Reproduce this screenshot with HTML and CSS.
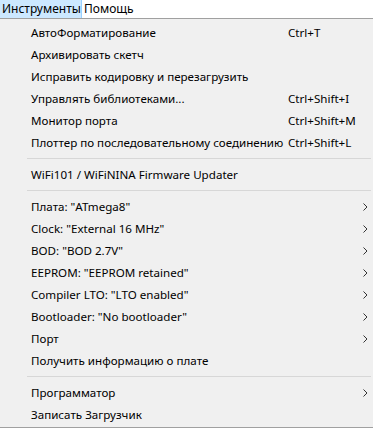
FILE: index.html
```html
<!DOCTYPE html>
<html>
	<head>
		<meta charset="utf-8" />
		<title>Инструменты</title>
		<link rel="stylesheet" href="styles.css">
	</head>
	<body>
		<div class="menubar">
			<span class="bar-item active">Инструменты</span>
			<span class="bar-item">Помощь</span>
		</div>

		<div class="menu">
			<div class="row"><span>АвтоФорматирование</span><span class="key">Ctrl+T</span></div>
			<div class="row"><span>Архивировать скетч</span></div>
			<div class="row"><span>Исправить кодировку и перезагрузить</span></div>
			<div class="row"><span>Управлять библиотеками...</span><span class="key">Ctrl+Shift+I</span></div>
			<div class="row"><span>Монитор порта</span><span class="key">Ctrl+Shift+M</span></div>
			<div class="row"><span>Плоттер по последовательному соединению</span><span class="key">Ctrl+Shift+L</span></div>
			<div class="sep"></div>
			<div class="row"><span>WiFi101 / WiFiNINA Firmware Updater</span></div>
			<div class="sep"></div>
			<div class="row sub"><span>Плата: "ATmega8"</span></div>
			<div class="row sub"><span>Clock: "External 16 MHz"</span></div>
			<div class="row sub"><span>BOD: "BOD 2.7V"</span></div>
			<div class="row sub"><span>EEPROM: "EEPROM retained"</span></div>
			<div class="row sub"><span>Compiler LTO: "LTO enabled"</span></div>
			<div class="row sub"><span>Bootloader: "No bootloader"</span></div>
			<div class="row sub"><span>Порт</span></div>
			<div class="row"><span>Получить информацию о плате</span></div>
			<div class="sep"></div>
			<div class="row sub"><span>Программатор</span></div>
			<div class="row"><span>Записать Загрузчик</span></div>
		</div>

		<script>
			// submenu arrows
			var arrow = '<svg class="arrow" width="5" height="8" viewBox="0 0 5 8"><path d="M0.5 0.5 L4 4 L0.5 7.5" fill="none" stroke="#333" stroke-width="1"/></svg>';
			document.querySelectorAll('.sub').forEach(function (row) {
				row.insertAdjacentHTML('beforeend', arrow);
			});
		</script>
	</body>
</html>
```

FILE: styles.css
```css
body {
	margin: 0;
	font-family: "Noto Sans", "Open Sans", sans-serif;
	font-size: 11.6px;
	color: #000;
	background-color: #f0f0f0;
}

.menubar {
	display: flex;
	height: 18px;
	background-color: #fff;
	border-bottom: 1px solid #a0a0a0;
	font-size: 12px;
}

.bar-item {
	padding: 0 4px 0 2px;
	line-height: 18px;
}

.bar-item.active {
	background-color: #cce8ff;
	border-right: 1px solid #99d1ff;
	width: 75px;
}

.menu {
	padding: 2px 0 2px;
	border-bottom: 1px solid #a0a0a0;
}

.row {
	position: relative;
	display: flex;
	align-items: center;
	height: 22px;
	padding-left: 31px;
}

.row span:first-child {
	width: 257px;
	white-space: nowrap;
}

.key {
	white-space: nowrap;
}

.arrow {
	position: absolute;
	right: 5px;
	top: 8px;
}

.sep {
	height: 1px;
	margin: 5px 2px 4px 27px;
	background-color: #d7d7d7;
}
```
